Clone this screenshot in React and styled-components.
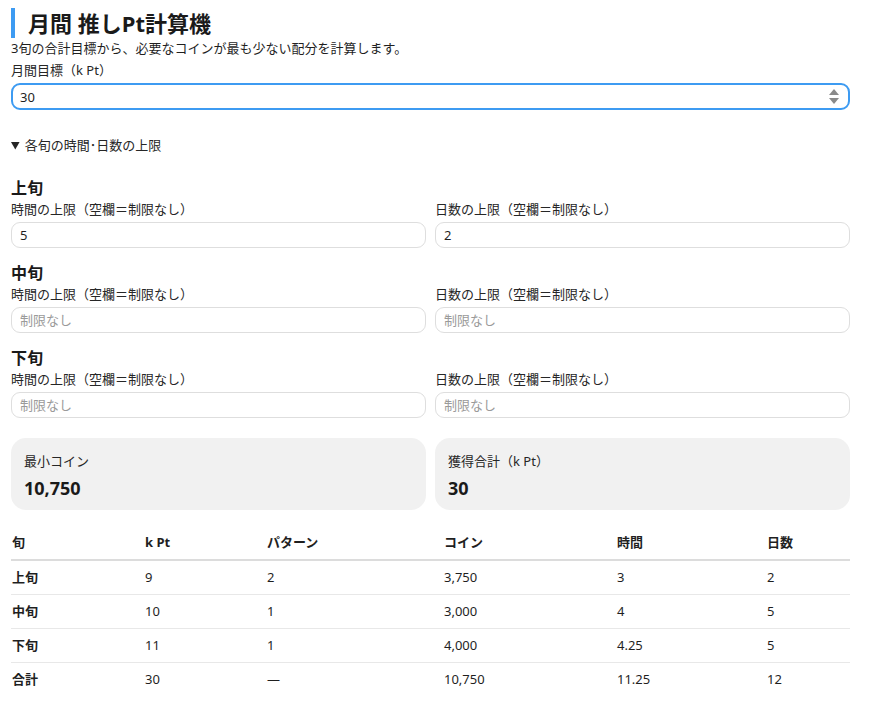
import React from 'react'
import styled, { createGlobalStyle } from 'styled-components'

const GlobalStyle = createGlobalStyle`
  html, body {
    margin: 0;
    padding: 0;
    background: #fff;
  }
  body {
    font-family: "Noto Sans", "Noto Sans CJK JP", sans-serif;
    color: #1f1f1f;
    font-size: 13px;
  }
  * { box-sizing: border-box; }
`

const Page = styled.div`
  padding: 8px 19px 0 11px;
`

const Title = styled.h1`
  margin: 0;
  border-left: 4px solid #3d9bf2;
  padding-left: 13px;
  font-size: 22px;
  line-height: 30px;
  font-weight: 700;
  color: #1a1a1a;
`

const Lead = styled.p`
  margin: 0;
  font-size: 13px;
  line-height: 20px;
`

const Label = styled.label`
  display: block;
  margin-top: ${p => p.$top || 0}px;
  font-size: 13px;
  line-height: 20px;
  color: #262626;
`

const InputWrap = styled.div`
  position: relative;
  margin-top: 3px;
`

const Input = styled.input`
  display: block;
  width: 100%;
  height: ${p => (p.$focus ? 27 : 26)}px;
  padding: 0 ${p => (p.$focus ? 7 : 8)}px;
  border: ${p => (p.$focus ? '2px solid #3d9bf2' : '1px solid #dedede')};
  border-radius: 9px;
  font-family: inherit;
  font-size: 13px;
  color: #1f1f1f;
  background: #fff;
  outline: none;
  &::placeholder {
    color: #9a9a9a;
  }
`

const Spinner = styled.span`
  position: absolute;
  right: 11px;
  top: 4px;
  width: 10px;
  height: 19px;
  display: flex;
  flex-direction: column;
  justify-content: space-between;
  align-items: center;
  padding: 2px 0;
`

const Tri = styled.span`
  width: 0;
  height: 0;
  border-left: 5px solid transparent;
  border-right: 5px solid transparent;
  ${p => (p.$up ? 'border-bottom: 6px solid #8a8a8a;' : 'border-top: 6px solid #8a8a8a;')}
`

const Details = styled.details`
  margin-top: 25px;
  summary {
    font-size: 13px;
    line-height: 20px;
    cursor: pointer;
    color: #262626;
  }
`

const Period = styled.section`
  margin-top: ${p => p.$top}px;
`

const PeriodTitle = styled.h3`
  margin: 0;
  font-size: 16px;
  line-height: 22px;
  font-weight: 700;
  color: #1a1a1a;
`

const TwoCol = styled.div`
  display: grid;
  grid-template-columns: 1fr 1fr;
  column-gap: 9px;
`

const Cards = styled(TwoCol)`
  margin-top: 20px;
`

const Card = styled.div`
  background: #f1f1f1;
  border-radius: 15px;
  padding: 14px 13px 10px;
`

const CardLabel = styled.div`
  font-size: 13px;
  line-height: 18px;
  color: #262626;
`

const CardValue = styled.div`
  margin-top: 6px;
  font-size: 18px;
  line-height: 24px;
  font-weight: 700;
  color: #1a1a1a;
`

const Table = styled.table`
  width: 100%;
  margin-top: 16px;
  border-collapse: collapse;
  font-size: 13px;
  th, td {
    text-align: left;
    padding: 6.5px 1px;
    line-height: 20px;
  }
  thead th {
    font-weight: 700;
    padding-top: 6px;
    border-bottom: 2px solid #dcdcdc;
  }
  tbody tr {
    border-bottom: 1px solid #e8e8e8;
  }
  tbody tr:last-child {
    border-bottom: none;
  }
  tbody th {
    font-weight: 700;
  }
`

const periods = [
  { name: '上旬', hours: '5', days: '2', top: 22 },
  { name: '中旬', hours: '', days: '', top: 14 },
  { name: '下旬', hours: '', days: '', top: 14 },
]

const columns = [
  { label: '旬', width: 133 },
  { label: 'k Pt', width: 122 },
  { label: 'パターン', width: 177 },
  { label: 'コイン', width: 173 },
  { label: '時間', width: 150 },
  { label: '日数' },
]

const rows = [
  ['上旬', '9', '2', '3,750', '3', '2'],
  ['中旬', '10', '1', '3,000', '4', '5'],
  ['下旬', '11', '1', '4,000', '4.25', '5'],
  ['合計', '30', '—', '10,750', '11.25', '12'],
]

const LimitField = ({ label, value }) => (
  <div>
    <Label>{label}</Label>
    <InputWrap>
      <Input type="text" defaultValue={value} placeholder="制限なし" />
    </InputWrap>
  </div>
)

const App = () => {
  return (
    <>
      <GlobalStyle />
      <Page>
        <Title>月間 推しPt計算機</Title>
        <Lead>3旬の合計目標から、必要なコインが最も少ない配分を計算します。</Lead>
        <Label $top={2}>月間目標（k Pt）</Label>
        <InputWrap>
          <Input $focus type="text" defaultValue="30" />
          <Spinner>
            <Tri $up />
            <Tri />
          </Spinner>
        </InputWrap>

        <Details open>
          <summary>各旬の時間･日数の上限</summary>
          {periods.map(p => (
            <Period key={p.name} $top={p.top}>
              <PeriodTitle>{p.name}</PeriodTitle>
              <TwoCol>
                <LimitField label="時間の上限（空欄＝制限なし）" value={p.hours} />
                <LimitField label="日数の上限（空欄＝制限なし）" value={p.days} />
              </TwoCol>
            </Period>
          ))}
        </Details>

        <Cards>
          <Card>
            <CardLabel>最小コイン</CardLabel>
            <CardValue>10,750</CardValue>
          </Card>
          <Card>
            <CardLabel>獲得合計（k Pt）</CardLabel>
            <CardValue>30</CardValue>
          </Card>
        </Cards>

        <Table>
          <thead>
            <tr>
              {columns.map(c => (
                <th key={c.label} style={c.width ? { width: c.width } : undefined}>{c.label}</th>
              ))}
            </tr>
          </thead>
          <tbody>
            {rows.map(r => (
              <tr key={r[0]}>
                <th>{r[0]}</th>
                {r.slice(1).map((v, i) => (
                  <td key={i}>{v}</td>
                ))}
              </tr>
            ))}
          </tbody>
        </Table>
      </Page>
    </>
  )
}

export default App
